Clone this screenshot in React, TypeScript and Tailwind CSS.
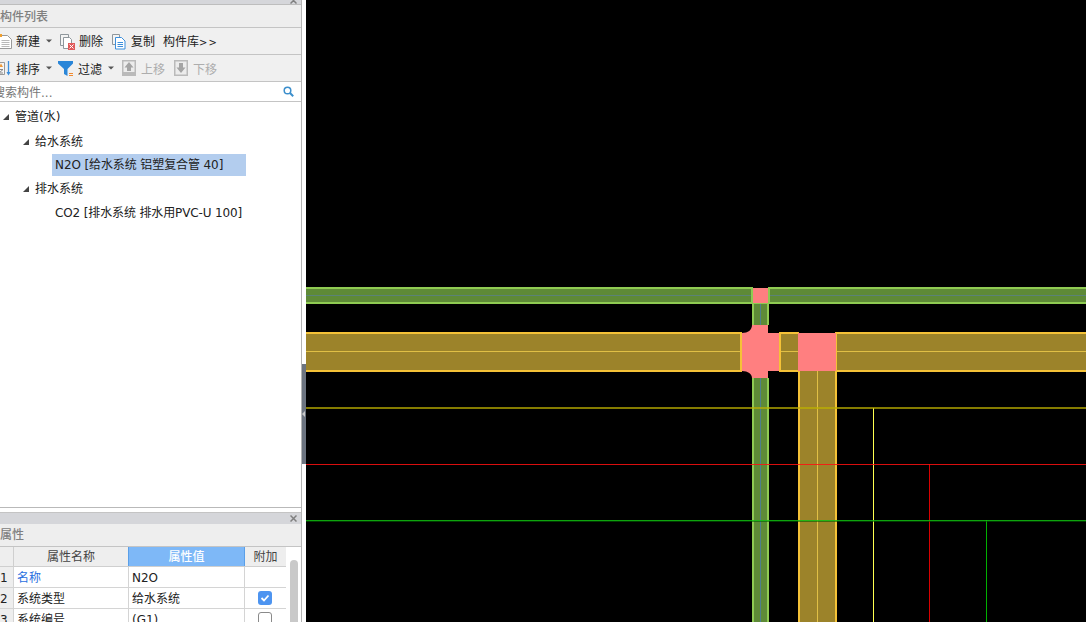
import React from 'react';

function Caret({ className = '' }: { className?: string }) {
    return (
        <svg className={className} width="6" height="4" viewBox="0 0 6 4">
            <path d="M0 0.5h6L3 3.5z" fill="#555" />
        </svg>
    );
}

function NewIcon() {
    return (
        <svg className="ml-[-2px] mr-[3px] shrink-0" width="15" height="17" viewBox="0 0 15 17">
            <path d="M1.5 2.5h8l4 4v9h-12z" fill="#fff" stroke="#9a9a9a" />
            <path d="M3.5 7.5h8M3.5 9.5h8M3.5 11.5h8M3.5 13.5h8" stroke="#b9b9b9" />
            <path d="M0 1h4v3H0z" fill="#f0a030" />
        </svg>
    );
}

function DeleteIcon() {
    return (
        <svg className="mr-[4px] shrink-0" width="15" height="17" viewBox="0 0 15 17">
            <path d="M0.5 1.5h8v11h-8z" fill="#f4f4f4" stroke="#8f979c" />
            <path d="M3.5 4.5h6l2 2v9h-8z" fill="#fff" stroke="#8f979c" />
            <path d="M8 10h7v7H8z" fill="#e05a5a" />
            <path d="M9.5 11.5l4 4m0-4l-4 4" stroke="#fff" />
        </svg>
    );
}

function CopyIcon() {
    return (
        <svg className="mr-[5px] shrink-0" width="14" height="17" viewBox="0 0 14 17">
            <path d="M0.5 1.5h7v10h-7z" fill="#f4f4f4" stroke="#8f979c" />
            <path d="M3.5 4.5h6l3.5 3.5v8h-9.500z" fill="#fff" stroke="#3c8fdc" />
            <path d="M5.500 9.500h5.500M5.500 11.500h5.500M5.500 13.500h5.500" stroke="#3c8fdc" />
        </svg>
    );
}

function SortIcon() {
    return (
        <svg className="ml-[-3px] mr-[3px] shrink-0" width="16" height="17" viewBox="0 0 16 17">
            <path d="M0.500 2.500h7v12h-7z" fill="#f6f6f6" stroke="#999" />
            <path d="M2 7l2-3.500L6 7z" fill="#ef9a3a" />
            <path d="M2 9.500h4L2 13h4" fill="none" stroke="#888" />
            <path d="M11.500 1v13" stroke="#3c8fdc" strokeWidth="1.300" />
            <path d="M9.500 12l2 3.500 2-3.500z" fill="#3c8fdc" />
        </svg>
    );
}

function FilterIcon() {
    return (
        <svg className="mr-[5px] shrink-0" width="15" height="17" viewBox="0 0 15 17">
            <path d="M0 1h15v2.500L9.500 9v7L6 14V9L0 3.500z" fill="#2a86d8" />
            <path d="M11 13.500h4M11 15.500h4" stroke="#f08a30" />
        </svg>
    );
}

function MoveIcon({ down }: { down?: boolean }) {
    return (
        <svg className="mr-[5px] shrink-0" width="14" height="16" viewBox="0 0 14 16">
            <path d="M0.750 0.750h12.500v14.500h-12.500z" fill="#ececec" stroke="#bababa" strokeWidth="1.500" />
            {down ? null : <path d="M0 12h14v4H0z" fill="#bababa" />}
            {down ? (
                <path d="M5 3h4v4.500h2.500L7 13 2.500 7.500H5z" fill="#a4a4a4" />
            ) : (
                <path d="M7 2l4.500 5.500H9V11H5V7.500H2.500z" fill="#a4a4a4" />
            )}
        </svg>
    );
}

function Close() {
    return (
        <svg width="7" height="7" viewBox="0 0 7 7">
            <path d="M0.500 0.500l6 6m0-6l-6 6" stroke="#808080" strokeWidth="1.500" />
        </svg>
    );
}

const rows = [
    { no: '1', name: '名称', value: 'N2O', blue: true },
    { no: '2', name: '系统类型', value: '给水系统', check: 'on' },
    { no: '3', name: '系统编号', value: '(G1)', check: 'off' },
];

function Treeline({ pad, text, tall }: { pad: string; text: string; tall?: boolean }) {
    return (
        <div className={`flex items-center ${tall ? 'mb-[1px] h-[25px]' : 'h-6'} ${pad}`}>
            <svg className="mr-[6px]" width="6" height="6" viewBox="0 0 6 6">
                <path d="M6 0v6H0z" fill="#444" />
            </svg>
            {text}
        </div>
    );
}

export default function App() {
    return (
        <div className="flex h-[622px] w-[1086px] overflow-hidden bg-white font-['DejaVu_Sans','Noto_Sans_CJK_SC',sans-serif] text-[12px] text-[#222]">
            {/* left panels */}
            <aside className="flex w-[302px] shrink-0 flex-col overflow-hidden border-r border-[#b4b4b4]">
                {/* component list */}
                <section className="flex h-[508px] shrink-0 flex-col border-b border-[#b9b9b9]">
                    <div className="flex h-[5px] shrink-0 items-end justify-end overflow-hidden border-b border-[#bdbdbd] bg-[#d5d6da] pr-[4px]">
                        <Close />
                    </div>
                    <div className="flex h-[22px] shrink-0 items-center bg-[#eeeeee] pt-[2px] font-medium text-[#808080]">构件列表</div>
                    <div className="flex h-[28px] shrink-0 items-center border-y border-[#c4c4c4] bg-[#f0f0f0] [&>span]:mt-[2px]">
                        <NewIcon />
                        <span>新建</span>
                        <Caret className="ml-[6px] mr-[8px]" />
                        <DeleteIcon />
                        <span>删除</span>
                        <span className="w-[9px]" />
                        <CopyIcon />
                        <span>复制</span>
                        <span className="ml-[8px]">构件库<span className="text-[10px] tracking-[1px]">&gt;&gt;</span></span>
                    </div>
                    <div className="flex h-[27px] shrink-0 items-center border-b border-[#c4c4c4] bg-[#f0f0f0] [&>span]:mt-[4px]">
                        <SortIcon />
                        <span>排序</span>
                        <Caret className="ml-[6px] mr-[6px]" />
                        <FilterIcon />
                        <span>过滤</span>
                        <Caret className="ml-[6px] mr-[8px]" />
                        <MoveIcon />
                        <span className="text-[#adadad]">上移</span>
                        <span className="w-[9px]" />
                        <MoveIcon down />
                        <span className="text-[#adadad]">下移</span>
                    </div>
                    <div className="flex h-[20px] shrink-0 items-center justify-between border-b border-[#c4c4c4] pr-[7px] text-[#777]">
                        <span className="ml-[-7px] mt-[2px]">搜索构件...</span>
                        <svg width="11" height="11" viewBox="0 0 11 11">
                            <circle cx="4.500" cy="4.500" r="3.300" fill="none" stroke="#3c8fcc" strokeWidth="1.500" />
                            <path d="M7 7l3.200 3.200" stroke="#3c8fcc" strokeWidth="2" />
                        </svg>
                    </div>
                    <div className="flex-1 pt-[2px]">
                        <Treeline pad="pl-[3px]" text="管道(水)" tall />
                        <Treeline pad="pl-[23px]" text="给水系统" />
                        <div className="ml-[52px] flex h-[22px] w-[194px] items-center bg-[#b3cdee] pl-[3px] tracking-[-0.1px]">N2O [给水系统 铝塑复合管 40]</div>
                        <div className="h-[1px]" />
                        <Treeline pad="pl-[23px]" text="排水系统" />
                        <div className="flex h-6 items-center pl-[55px] tracking-[-0.13px]">CO2 [排水系统 排水用PVC-U 100]</div>
                    </div>
                </section>
                <div className="h-[4px] shrink-0" />
                {/* properties */}
                <section className="flex flex-1 flex-col overflow-hidden border-t border-[#c4c4c4]">
                    <div className="flex h-[11px] shrink-0 items-center justify-end bg-[#d5d6da] pr-[4px]">
                        <Close />
                    </div>
                    <div className="flex h-[22px] shrink-0 items-center bg-[#eeeeee] font-medium text-[#808080]">属性</div>
                    <div className="flex flex-1 border-t border-[#c4c4c4]">
                        <div className="w-[286px] shrink-0">
                            <div className="grid h-[20px] grid-cols-[14px_114px_117px_41px] border-b border-[#cfcfcf] bg-[#eeeeee] text-center text-[#444]">
                                <div className="border-r border-[#cfcfcf]" />
                                <div className="flex items-center justify-center">属性名称</div>
                                <div className="flex items-center justify-center border-x border-[#5a9fe8] bg-[#7eb8f7] font-medium text-white">属性值</div>
                                <div className="flex items-center justify-center">附加</div>
                            </div>
                            {rows.map((r) => (
                                <div key={r.no} className="grid h-[21px] grid-cols-[14px_114px_117px_41px] border-b border-[#d4d4d4]">
                                    <div className="flex items-center overflow-hidden border-r border-[#d4d4d4] bg-[#eeeeee] pt-[2px]">{r.no}</div>
                                    <div className={`flex items-center pl-[3px] pt-[2px] ${r.blue ? 'text-[#2a70e0]' : ''}`}>{r.name}</div>
                                    <div className="flex items-center border-x border-[#d4d4d4] pl-[3px] pt-[2px]">{r.value}</div>
                                    <div className="flex items-center justify-center pr-[1px]">
                                        {r.check === 'on' && (
                                            <span className="flex h-[14px] w-[14px] items-center justify-center rounded-[3px] bg-[#4d94f0]">
                                                <svg width="10" height="8" viewBox="0 0 10 8">
                                                    <path d="M1.500 4l2.500 2.500 4.500-5" fill="none" stroke="#fff" strokeWidth="1.800" />
                                                </svg>
                                            </span>
                                        )}
                                        {r.check === 'off' && <span className="h-[14px] w-[14px] rounded-[3px] border border-[#8a8a8a] bg-white" />}
                                    </div>
                                </div>
                            ))}
                        </div>
                        <div className="flex-1 px-[4px] pt-[13px]">
                            <div className="h-[80px] w-[8px] rounded-t-[4px] bg-[#c9c9c9]" />
                        </div>
                    </div>
                </section>
            </aside>

            {/* splitter */}
            <div className="w-[4px] shrink-0 pt-[364px]">
                <div className="flex h-[100px] items-center bg-[#6c7480]">
                    <svg width="3" height="6" viewBox="0 0 3 6">
                        <path d="M3 0v6L0 3z" fill="#c8c8c8" />
                    </svg>
                </div>
            </div>

            {/* drawing canvas */}
            <svg className="block flex-1" viewBox="306 0 780 622" width="780" height="622" shapeRendering="crispEdges">
                <rect x="306" y="0" width="780" height="622" fill="#000" />

                {/* green main */}
                <rect x="306" y="287" width="447" height="17" fill="#8fcb52" />
                <rect x="306" y="289" width="445" height="13" fill="#5e8a37" />
                <rect x="306" y="295" width="445" height="1" fill="#5b8277" />
                <rect x="768" y="287" width="318" height="17" fill="#8fcb52" />
                <rect x="770" y="289" width="316" height="13" fill="#5e8a37" />
                <rect x="770" y="295" width="316" height="1" fill="#5b8277" />
                <rect x="753" y="288" width="15" height="15" fill="#ff7f80" />

                {/* green riser */}
                <rect x="752" y="303" width="17" height="22" fill="#8fcb52" />
                <rect x="754" y="304" width="13" height="21" fill="#5e8a37" />
                <rect x="760" y="304" width="1" height="21" fill="#4e7f8c" />
                <rect x="752" y="378" width="17" height="244" fill="#8fcb52" />
                <rect x="754" y="378" width="13" height="244" fill="#5e8a37" />
                <rect x="760" y="378" width="1" height="244" fill="#4e7f8c" />

                {/* yellow main */}
                <rect x="306" y="332" width="436" height="40" fill="#f5c237" />
                <rect x="306" y="334" width="434" height="36" fill="#9c832a" />
                <rect x="306" y="351" width="434" height="1" fill="#e0bf45" />
                <rect x="779" y="332" width="20" height="40" fill="#f5c237" />
                <rect x="781" y="334" width="17" height="36" fill="#9c832a" />
                <rect x="781" y="351" width="17" height="1" fill="#e0bf45" />
                <rect x="835" y="332" width="251" height="40" fill="#f5c237" />
                <rect x="837" y="334" width="249" height="36" fill="#9c832a" />
                <rect x="837" y="351" width="249" height="1" fill="#e0bf45" />

                {/* yellow riser */}
                <rect x="798" y="371" width="39" height="251" fill="#f5c237" />
                <rect x="800" y="371" width="35" height="251" fill="#9c832a" />
                <rect x="817" y="371" width="1" height="251" fill="#e0bf45" />

                {/* fittings */}
                <path
                    d="M752 325H768V333H779V371H768V378H752C752 374 748 371 742 371V333C748 333 752 330 752 325Z"
                    fill="#ff7f80"
                    shapeRendering="auto"
                />
                <rect x="798" y="333" width="38" height="38" fill="#ff7f80" />

                {/* thin lines */}
                <rect x="873" y="408" width="1" height="214" fill="#ffff50" />
                <rect x="929" y="464" width="1" height="158" fill="#d80000" />
                <rect x="986" y="520" width="1" height="102" fill="#00b000" />
                <rect x="306" y="407" width="780" height="2" fill="#bdb000" fillOpacity="0.7" />
                <rect x="306" y="464" width="780" height="1" fill="#ff1010" fillOpacity="0.85" />
                <rect x="306" y="520" width="780" height="1" fill="#10c010" fillOpacity="0.85" />
                <rect x="306" y="521" width="780" height="1" fill="#006000" fillOpacity="0.6" />
            </svg>
        </div>
    );
}
